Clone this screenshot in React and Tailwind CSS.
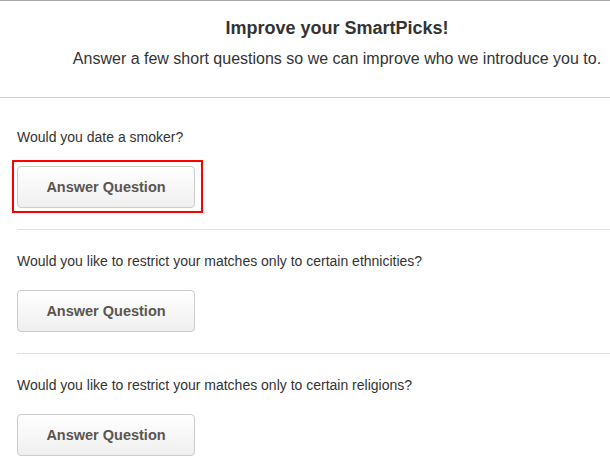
import React from 'react';

const questions = [
  { text: 'Would you date a smoker?', focused: true },
  { text: 'Would you like to restrict your matches only to certain ethnicities?' },
  { text: 'Would you like to restrict your matches only to certain religions?' },
];

const App = () => {
  return (
    <div
      className="w-[610px] h-[469px] overflow-hidden bg-white border-t border-[#a8a8a8] text-[#333]"
      style={{ fontFamily: '"Liberation Sans", Arial, sans-serif' }}
    >
      {/* Header */}
      <div className="pl-[64px] pt-[16px] pb-[28px] text-center border-b border-[#cfcfcf]">
        <h1 className="text-[18px] leading-[22px] font-bold">Improve your SmartPicks!</h1>
        <p className="mt-[10px] text-[16px] leading-[20px]">
          Answer a few short questions so we can improve who we introduce you to.
        </p>
      </div>

      {/* Questions */}
      <div className="pl-[17px]">
        {questions.map((q, i) => (
          <div
            key={i}
            className={`border-b border-[#e3e3e3] pb-[21px] ${i === 0 ? 'pt-[29px]' : 'pt-[21px]'}`}
          >
            <p className="text-[14px] leading-[20px]">{q.text}</p>
            <div className="relative inline-block mt-[19px] align-top">
              {q.focused && (
                <span className="absolute -left-[5px] -right-[8px] -top-[6px] -bottom-[5px] border-2 border-[#ff0000]" />
              )}
              <button className="relative block w-[178px] h-[42px] pt-[2px] rounded-[4px] border border-[#cbcbcb] bg-gradient-to-b from-white to-[#efefef] text-[14.5px] font-bold text-[#5a5550]">
                Answer Question
              </button>
            </div>
          </div>
        ))}
      </div>
    </div>
  );
};

export default App;
